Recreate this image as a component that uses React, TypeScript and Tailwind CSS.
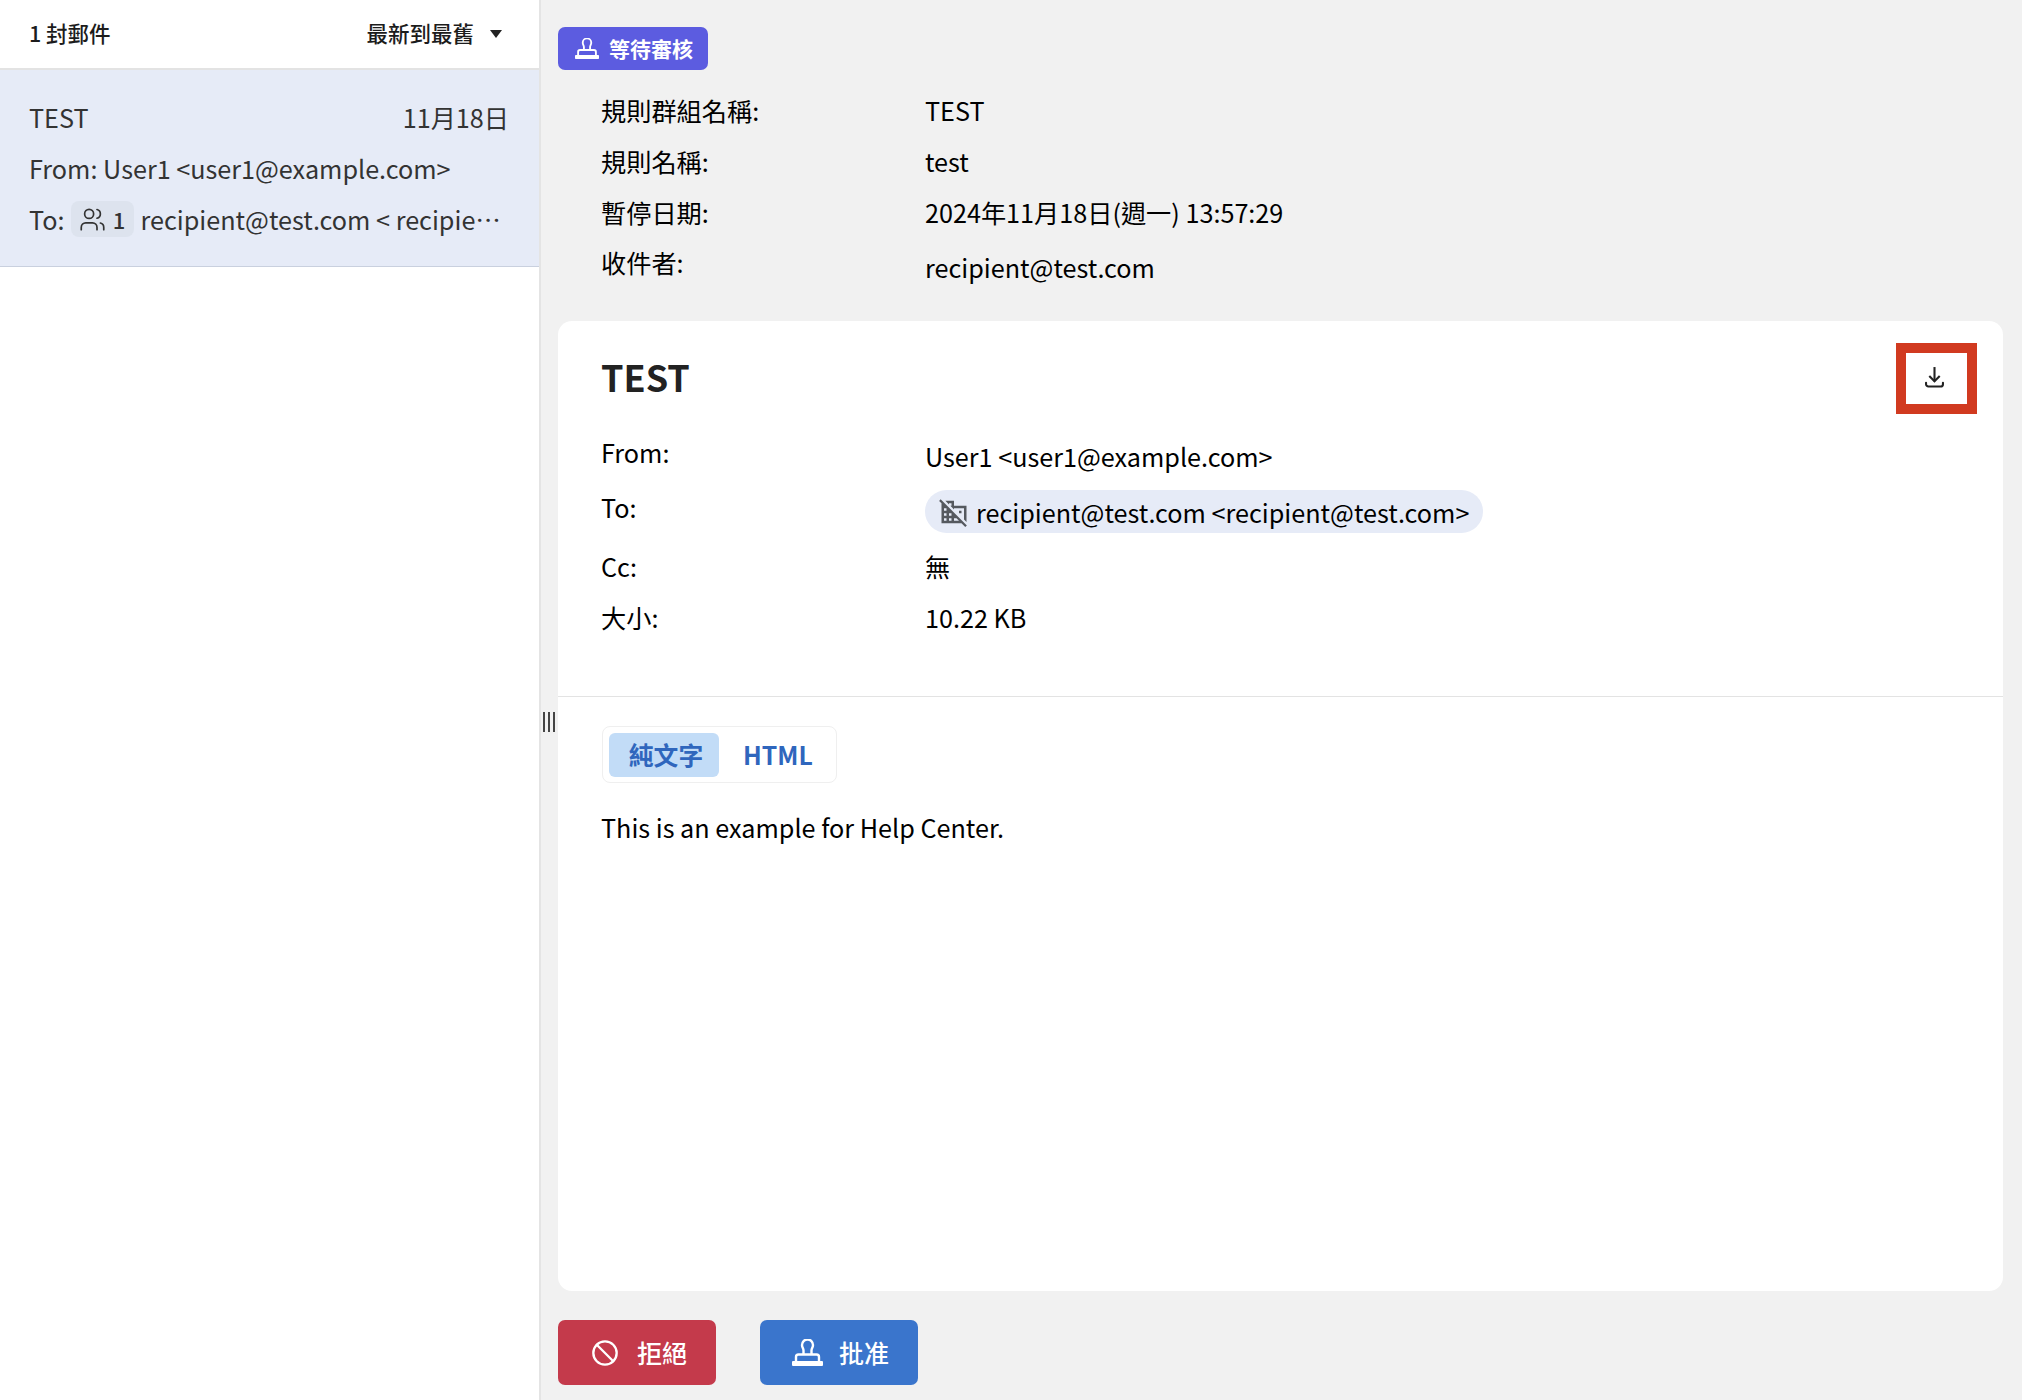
import React from "react";
import { Ban, Users } from "lucide-react";
import { MdDomainDisabled } from "react-icons/md";

// handle + base + thick foot, drawn by hand from the reference
const StampIcon = ({ className }: { className?: string }) => (
  <svg viewBox="0 0 31 27" fill="none" stroke="currentColor" strokeWidth="2.4" className={className}>
    <path d="M11.500 15.500v-4c0-2-1.500-3-1.500-5.500a5.500 5.500 0 0 1 11 0c0 2.500-1.500 3.500-1.500 5.500v4" />
    <path d="M4 23v-5a2.500 2.500 0 0 1 2.500-2.500h18a2.500 2.500 0 0 1 2.500 2.500v5" />
    <rect x="0" y="22" width="31" height="5" rx="1" fill="currentColor" stroke="none" />
  </svg>
);

const DownloadIcon = ({ className }: { className?: string }) => (
  <svg viewBox="0 0 20 24" fill="none" stroke="currentColor" strokeWidth="2.200" className={className}>
    <path d="M10 1v15" />
    <path d="M4.500 10.500 10 16l5.500-5.500" />
    <path d="M1.100 17.500v1.500a2.500 2.500 0 0 0 2.500 2.500h12.800a2.500 2.500 0 0 0 2.500-2.500v-1.500" strokeLinecap="round" />
  </svg>
);

const infoRows = [
  { label: "規則群組名稱:", value: "TEST" },
  { label: "規則名稱:", value: "test" },
  { label: "暫停日期:", value: "2024年11月18日(週一) 13:57:29" },
];

const Sidebar = () => (
  <aside className="w-[539px] shrink-0 bg-white border-r-2 border-[#e4e4e4] box-content">
    <div className="h-[70px] flex items-center justify-between pl-[29px] pr-[37px] pb-[1px] border-b-2 border-[#e3e3e3] text-[21.5px] font-medium text-[#1c1c1c]">
      <span>1 封郵件</span>
      <div className="flex items-center gap-[16px]">
        <span>最新到最舊</span>
        <svg viewBox="0 0 12 8" className="w-[12px] h-[8px] fill-[#222]">
          <path d="M0 0h12L6 8z" />
        </svg>
      </div>
    </div>
    <div className="h-[197px] bg-[#e6ebf7] border-b border-[#c9d0de] pl-[29px] pr-[30px] pt-[27px] text-[25.2px] leading-[40px] text-[#333]">
      <div className="h-[51px] flex justify-between">
        <span>TEST</span>
        <span>11月18日</span>
      </div>
      <div className="h-[51px]">From: User1 &lt;user1@example.com&gt;</div>
      <div className="flex items-center gap-[6px]">
        <span className="shrink-0">To:</span>
        <span className="shrink-0 h-[36px] w-[63px] rounded-[8px] bg-[#dde3ee] flex items-center justify-center gap-[7px] text-[22px] font-medium">
          <Users className="w-[27px] h-[27px]" strokeWidth={1.5} />
          1
        </span>
        <span className="truncate w-[364px] ml-[1px]">recipient@test.com &lt; recipient@test.com &gt;</span>
      </div>
    </div>
  </aside>
);

const EmailCard = () => (
  <section className="relative flex-1 bg-white rounded-[14px]">
    <div className="h-[376px] border-b border-[#e3e3e3] pl-[43px] pt-[31px]">
      <h1 className="text-[36px] leading-[48px] font-bold text-[#222] mb-[32px]">TEST</h1>
      <div className="grid grid-cols-[324px_1fr] grid-rows-[54px_60px_51px_40px] text-[25.2px] leading-[40px] text-black">
        <div>From:</div>
        <div className="pt-[4px]">User1 &lt;user1@example.com&gt;</div>
        <div className="pt-[1px]">To:</div>
        <div className="pt-[4px]">
          <span className="inline-flex items-center h-[43px] rounded-full bg-[#e6ebf7] pl-[14px] pr-[14px] gap-[7px]">
            <MdDomainDisabled className="w-[30px] h-[30px] text-[#55595f]" />
            recipient@test.com &lt;recipient@test.com&gt;
          </span>
        </div>
        <div>Cc:</div>
        <div>無</div>
        <div>大小:</div>
        <div>10.22 KB</div>
      </div>
    </div>
    <div className="pl-[44px] pt-[29px]">
      <div className="inline-flex items-center h-[57px] w-[235px] border border-[#efefef] rounded-[8px] pl-[6px] text-[24.8px] font-semibold text-[#2f66bd]">
        <span className="w-[110px] h-[44px] rounded-[6px] bg-[#c2dcf7] flex items-center justify-center pl-[4px]">純文字</span>
        <span className="ml-[24px]">HTML</span>
      </div>
      <p className="mt-[24px] -ml-[1px] text-[25.2px] leading-[40px] text-black">This is an example for Help Center.</p>
    </div>
    <button className="absolute left-[1338px] top-[22px] w-[81px] h-[71px] border-[10px] border-[#d13a20] flex items-center justify-center text-[#222]">
      <DownloadIcon className="w-[19px] h-[23px] -ml-[5px] -mt-[2px]" />
    </button>
  </section>
);

export default function App() {
  return (
    <div
      className="relative flex h-[1400px] w-[2022px] overflow-hidden bg-[#f1f1f1]"
      style={{ fontFamily: '"Noto Sans CJK TC", "Noto Sans", sans-serif' }}
    >
      <Sidebar />
      {/* splitter handle */}
      <div className="absolute left-[543px] top-[712px] h-[20px] w-[12px] flex justify-between">
        <span className="w-[2px] h-full bg-[#444]" />
        <span className="w-[2px] h-full bg-[#444]" />
        <span className="w-[2px] h-full bg-[#444]" />
      </div>
      <main className="flex-1 min-w-0 flex flex-col pl-[17px] pr-[19px] pt-[27px] pb-[15px]">
        <div className="self-start h-[43px] w-[150px] rounded-[7px] bg-[#5c5ce0] text-white text-[21px] font-bold flex items-center pl-[17px] gap-[10px]">
          <StampIcon className="w-[24px] h-[21px]" />
          等待審核
        </div>
        <div className="mt-[14px] mb-[33px] pl-[43px] text-[25.2px] leading-[40px] text-black">
          {infoRows.map((row) => (
            <div key={row.label} className="h-[51px] flex items-center">
              <span className="w-[324px]">{row.label}</span>
              <span>{row.value}</span>
            </div>
          ))}
          <div className="h-[51px] flex">
            <span className="w-[324px] pt-[5px]">收件者:</span>
            <span className="pt-[10px]">recipient@test.com</span>
          </div>
        </div>
        <EmailCard />
        <div className="mt-[29px] flex gap-[44px] text-[25px] font-medium text-white">
          <button className="w-[158px] h-[65px] rounded-[7px] bg-[#c43a4b] flex items-center pl-[33px] gap-[18px]">
            <Ban className="w-[28px] h-[28px]" strokeWidth={2} />
            拒絕
          </button>
          <button className="w-[158px] h-[65px] rounded-[7px] bg-[#3a75cc] flex items-center pl-[32px] gap-[16px]">
            <StampIcon className="w-[31px] h-[27px]" />
            批准
          </button>
        </div>
      </main>
    </div>
  );
}
